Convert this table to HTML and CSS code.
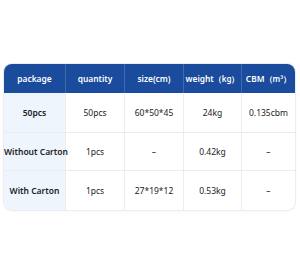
FILE: index.html
```html
<!DOCTYPE html>
<html>
<head>
<meta charset="utf-8">
<link rel="stylesheet" href="styles.css">
</head>
<body>
<div class="page">
  <table class="spec">
    <colgroup>
      <col class="c1"><col class="c2"><col class="c3"><col class="c4"><col class="c5">
    </colgroup>
    <thead>
      <tr>
        <th>package</th>
        <th>quantity</th>
        <th>size(cm)</th>
        <th>weight<span class="par">（kg）</span></th>
        <th>CBM<span class="par">（m³）</span></th>
      </tr>
    </thead>
    <tbody>
      <tr class="r1">
        <td class="name">50pcs</td>
        <td>50pcs</td>
        <td>60*50*45</td>
        <td>24kg</td>
        <td>0.135cbm</td>
      </tr>
      <tr class="r2">
        <td class="name">Without Carton</td>
        <td>1pcs</td>
        <td>–</td>
        <td>0.42kg</td>
        <td>–</td>
      </tr>
      <tr class="r3">
        <td class="name">With Carton</td>
        <td>1pcs</td>
        <td>27*19*12</td>
        <td>0.53kg</td>
        <td>–</td>
      </tr>
    </tbody>
  </table>
</div>
</body>
</html>
```
FILE: styles.css
```css
html, body {
  margin: 0;
  padding: 0;
  background: #ffffff;
}
body {
  width: 300px;
  height: 273px;
  font-family: "Noto Sans", "Liberation Sans", sans-serif;
}
.page {
  padding: 64px 5px 0 4px;
}
.spec {
  width: 291px;
  border-collapse: separate;
  border-spacing: 0;
  table-layout: fixed;
  border-radius: 8px;
  box-shadow: 0 0 0 1px #ececec, 0 1px 4px rgba(0, 0, 0, 0.04);
  overflow: hidden;
}
.c1 { width: 61px; }
.c2 { width: 59px; }
.c3 { width: 59px; }
.c4 { width: 58px; }
.c5 { width: 54px; }
th {
  height: 29px;
  padding: 0;
  background: #1a4b9c;
  color: #ffffff;
  font-size: 8.4px;
  font-weight: 600;
  text-align: center;
  border-left: 1px solid #3d6ab3;
  white-space: nowrap;
}
.par {
  font-size: 8px;
}
th:first-child { border-left: none; }
td {
  padding: 0;
  font-size: 8.5px;
  color: #222222;
  text-align: center;
  border-left: 1px solid #ececec;
  border-top: 1px solid #ececec;
  white-space: nowrap;
}
td:first-child { border-left: none; }
tbody tr:first-child td { border-top: none; }
td.name {
  background: #eef5fd;
  font-weight: 600;
}
.r1 td { height: 39px; }
.r2 td { height: 37px; }
.r3 td { height: 39px; }
```
